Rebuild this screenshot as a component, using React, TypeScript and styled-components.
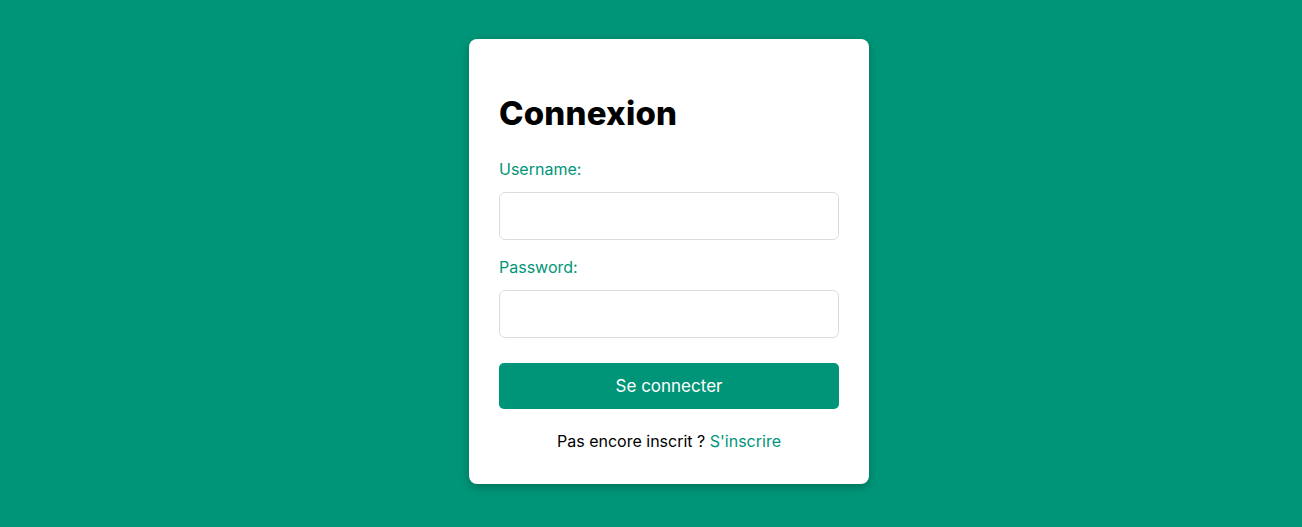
import * as React from "react";
import styled, { createGlobalStyle } from "styled-components";

const GREEN = "#009578";

const GlobalStyle = createGlobalStyle`
    html, body {
        margin: 0;
        padding: 0;
        background: ${GREEN};
        font-family: "Inter", "Liberation Sans", sans-serif;
    }
    * {
        box-sizing: border-box;
    }
`;

const Page = styled.div`
    min-height: 100vh;
    display: flex;
    align-items: center;
    justify-content: center;
    padding-left: 36px;
    padding-bottom: 4px;
`;

const Card = styled.form`
    width: 400px;
    background: #fff;
    border-radius: 8px;
    box-shadow: 0 3px 8px rgba(0, 0, 0, 0.25);
    padding: 52px 30px 31px;
    display: flex;
    flex-direction: column;
`;

const Title = styled.h1`
    margin: 0;
    font-size: 33px;
    line-height: 44px;
    font-weight: 800;
    color: #000;
    letter-spacing: 0.2px;
`;

const Label = styled.label<{ $first?: boolean }>`
    margin-top: ${p => (p.$first ? "22px" : "15px")};
    font-size: 16px;
    line-height: 24px;
    color: ${GREEN};
`;

const Input = styled.input`
    margin-top: 11px;
    height: 48px;
    width: 100%;
    border: 1px solid #dcdcdc;
    border-radius: 6px;
    padding: 0 12px;
    font-size: 16px;
    font-family: inherit;
    outline: none;
`;

const Submit = styled.button`
    margin-top: 25px;
    height: 46px;
    width: 100%;
    border: none;
    border-radius: 5px;
    background: ${GREEN};
    color: #fff;
    font-family: inherit;
    font-size: 17px;
    cursor: pointer;
`;

const Footer = styled.p`
    margin: 20px 0 0;
    text-align: center;
    font-size: 16px;
    line-height: 24px;
    color: #000;
`;

const SignupLink = styled.a`
    color: ${GREEN};
    text-decoration: none;
`;

export default function App() {
    return (
        <>
            <GlobalStyle />
            <Page>
                <Card onSubmit={e => e.preventDefault()}>
                    <Title>Connexion</Title>
                    <Label $first htmlFor="username">Username:</Label>
                    <Input id="username" type="text" />
                    <Label htmlFor="password">Password:</Label>
                    <Input id="password" type="password" />
                    <Submit type="submit">Se connecter</Submit>
                    <Footer>
                        Pas encore inscrit ? <SignupLink href="#">S'inscrire</SignupLink>
                    </Footer>
                </Card>
            </Page>
        </>
    );
}
